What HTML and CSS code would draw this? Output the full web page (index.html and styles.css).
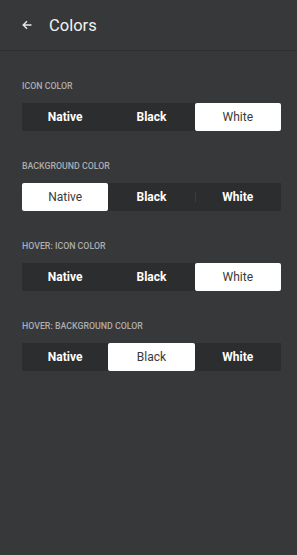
FILE: index.html
```html
<!DOCTYPE html>
<html lang="en">
<head>
    <meta charset="UTF-8">
    <meta name="viewport" content="width=device-width, initial-scale=1.0">
    <title>Colors</title>
    <link rel="stylesheet" href="styles.css">
</head>
<body>
    <div class="header">
        <svg class="back" width="10" height="10" viewBox="0 0 10 10">
            <path d="M9.5 5H1.2M5 1.2L1.2 5 5 8.8" fill="none" stroke="#e8e8e8" stroke-width="1.4"/>
        </svg>
        <div class="title">Colors</div>
    </div>
    <div class="content">
        <div class="section">
            <div class="label">Icon color</div>
            <div class="segments">
                <div class="seg">Native</div>
                <div class="seg">Black</div>
                <div class="seg active">White</div>
            </div>
        </div>
        <div class="section">
            <div class="label">Background color</div>
            <div class="segments">
                <div class="seg active">Native</div>
                <div class="seg">Black</div>
                <div class="seg split">White</div>
            </div>
        </div>
        <div class="section">
            <div class="label">Hover: icon color</div>
            <div class="segments">
                <div class="seg">Native</div>
                <div class="seg">Black</div>
                <div class="seg active">White</div>
            </div>
        </div>
        <div class="section">
            <div class="label">Hover: background color</div>
            <div class="segments">
                <div class="seg">Native</div>
                <div class="seg active">Black</div>
                <div class="seg">White</div>
            </div>
        </div>
    </div>
</body>
</html>
```

FILE: styles.css
```css
body {
    margin: 0;
    height: 555px;
    background-color: #37383a;
    font-family: Roboto, "Liberation Sans", sans-serif;
    color: #ffffff;
}
.header {
    height: 50px;
    display: flex;
    align-items: center;
    padding: 0 22px;
    border-bottom: 1px solid #2e2f31;
}
.back {
    margin-right: 17px;
}
.title {
    font-size: 16.5px;
    color: #f2f2f2;
}
.content {
    display: flex;
    flex-direction: column;
    gap: 30px;
    padding: 30px 16px 0 22px;
}
.label {
    font-size: 8.8px;
    line-height: 10px;
    font-weight: 500;
    text-transform: uppercase;
    color: #adadad;
    margin-bottom: 12px;
}
.segments {
    display: flex;
    height: 28px;
    background-color: #2c2d2e;
}
.seg {
    flex: 1;
    display: flex;
    align-items: center;
    justify-content: center;
    font-size: 12px;
    font-weight: 700;
    position: relative;
}
.seg.active {
    background-color: #ffffff;
    color: #3a3a3a;
    font-weight: 400;
    border-radius: 2px;
}
.seg.split::before {
    content: "";
    position: absolute;
    left: 0;
    top: 9px;
    height: 10px;
    border-left: 1px solid #3c3d3f;
}
```
